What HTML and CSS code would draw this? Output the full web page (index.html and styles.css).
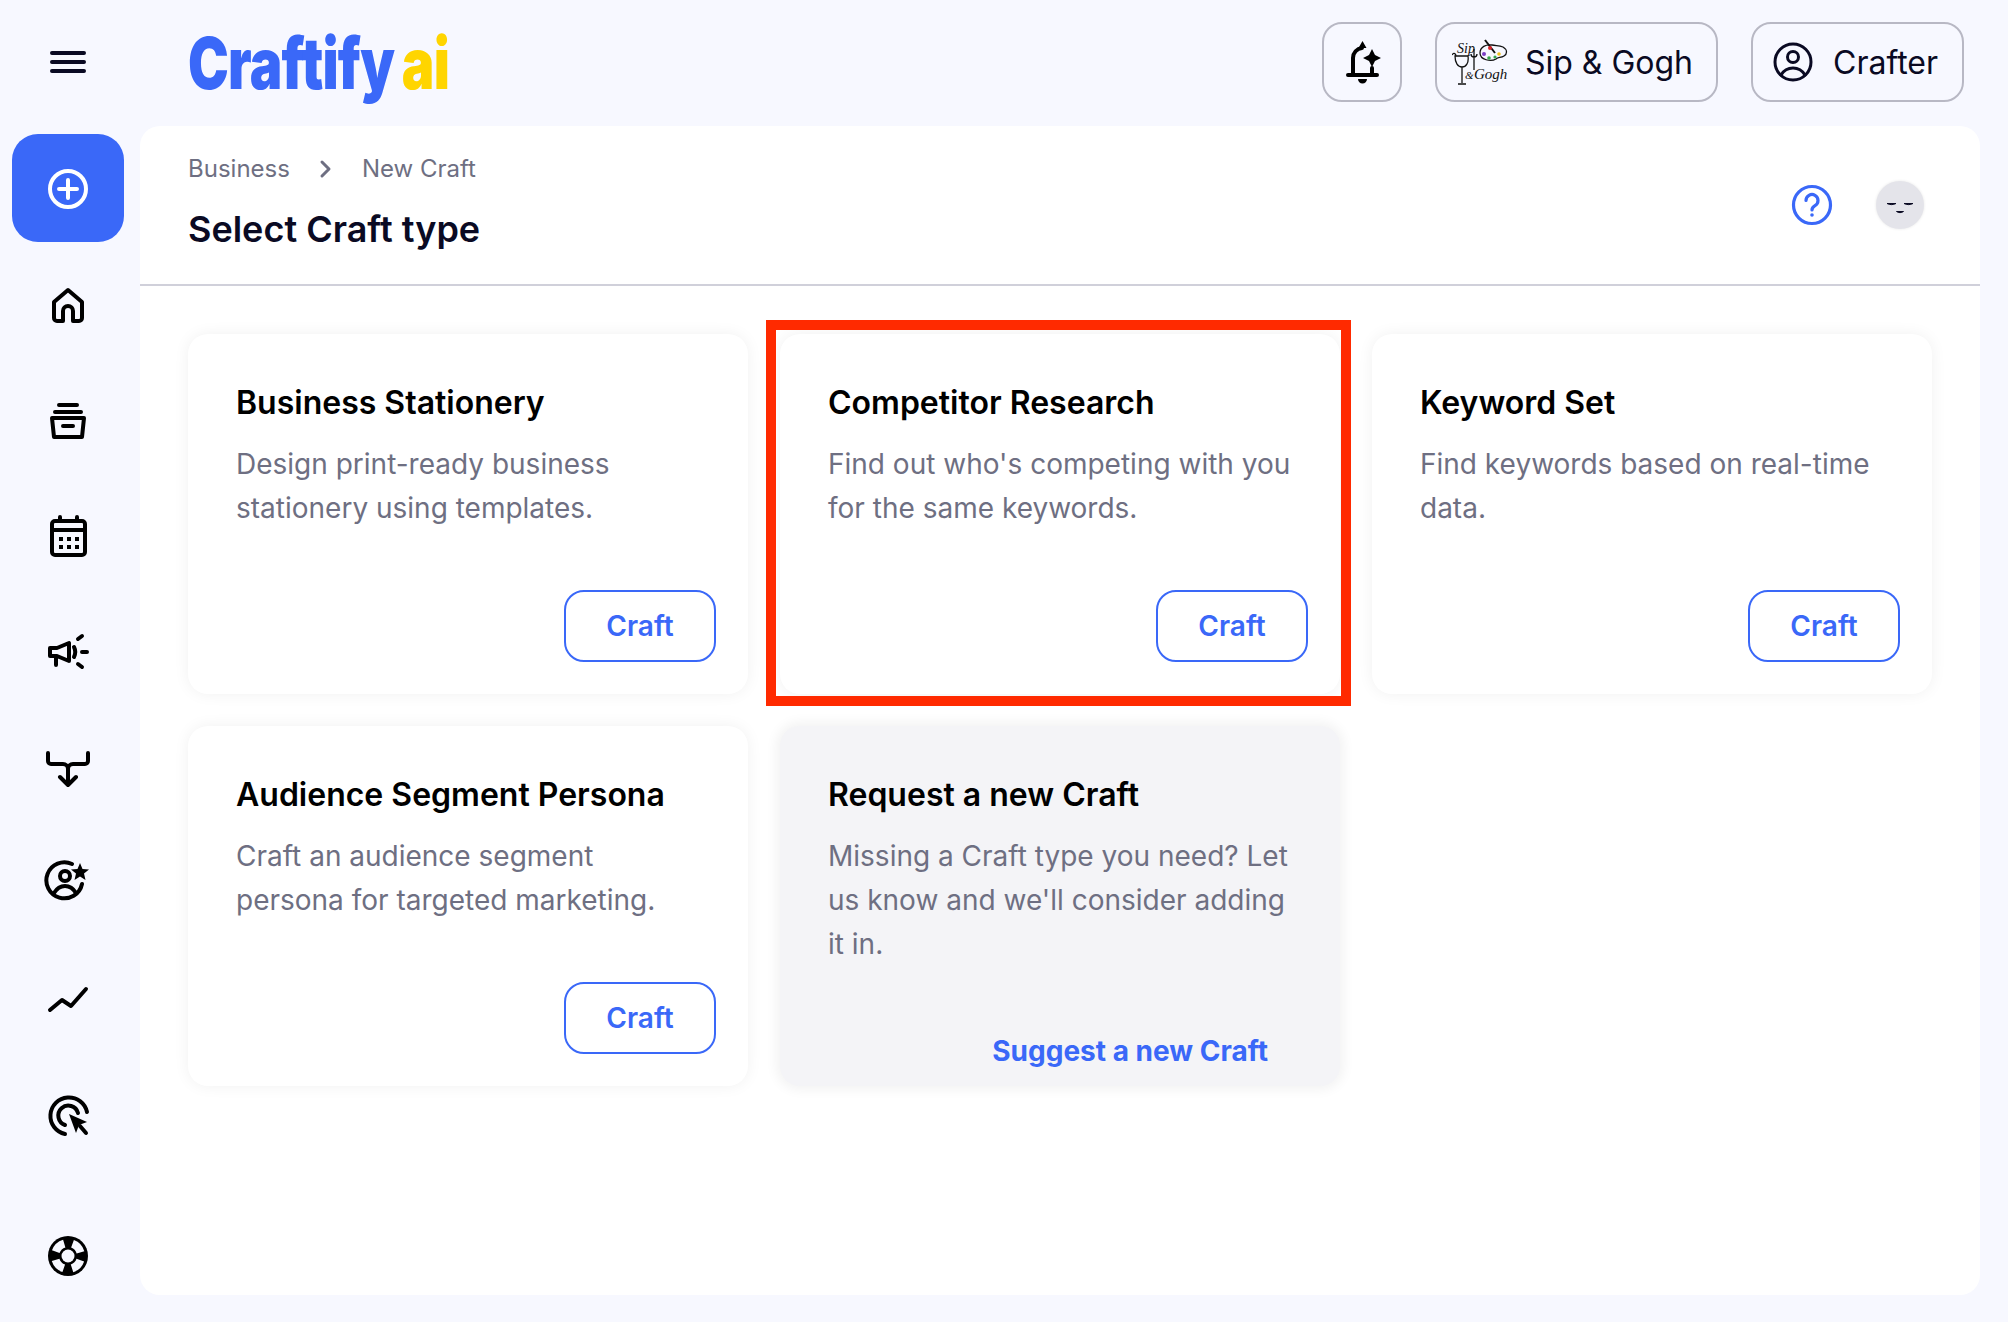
FILE: index.html
```html
<!DOCTYPE html>
<html>
<head>
    <title>Select Craft type</title>
    <link rel="stylesheet" href="styles.css">
</head>
<body>
    <div class="app">
        <div class="menu-cell">
            <svg class="burger" width="36" height="24" viewBox="0 0 36 24"><path d="M2 3H34M2 12H34M2 21H34"/></svg>
        </div>

        <header class="topbar">
            <a class="logo"><span class="logo-main">Craftify</span><span class="logo-ai">ai</span></a>
            <div class="top-actions">
                <button class="top-btn bell-btn">
                    <svg class="icon" width="48" height="48" viewBox="-1 0 48 48">
                        <path d="M14 36V20a10 10 0 0 1 9-10M33 30V36M9 37H38"/>
                        <path class="solid" d="M23.500 3l4 7h-8zM19 41h9a4.500 4.500 0 0 1-9 0zM33 11l3 6 6 3-6 3-3 6-3-6-6-3 6-3z"/>
                    </svg>
                </button>
                <button class="top-btn brand-btn">
                    <svg class="brand-mark" width="56" height="46" viewBox="0 0 56 46">
                        <text class="mark-script" x="5" y="14">Sip</text>
                        <path class="mark-line" d="M0 16c2-3 4-1 4 1M3 17h13c1 7-2 11-6 11s-7-4-7-11zM10 28V44M6 45H14M22 10V31M19 15c0 4 6 4 6 0"/>
                        <text class="mark-script mark-small" x="13" y="40">&amp;</text>
                        <text class="mark-script mark-big" x="22" y="40">Gogh</text>
                        <path class="mark-line" d="M28 14c0-6 6-9 12-8 4 1 7 0 11 2 5 3 4 7 1 9-3 2-6 1-8 3-5 3-16 1-16-6z"/>
                        <path class="mark-line mark-brush" d="M33 1l10 13"/>
                        <circle cx="32" cy="15" r="2" fill="#7b3fc4"/>
                        <circle cx="38" cy="9" r="2" fill="#d8262c"/>
                        <circle cx="37" cy="19" r="1.800" fill="#35a84a"/>
                        <circle cx="47" cy="15" r="1.800" fill="#f1c21b"/>
                        <circle cx="43" cy="18" r="1.600" fill="#35a84a"/>
                    </svg>
                    <span>Sip &amp; Gogh</span>
                </button>
                <button class="top-btn crafter-btn">
                    <svg class="icon thin" width="40" height="40" viewBox="0 0 40 40">
                        <circle cx="20" cy="20" r="18"/>
                        <circle cx="20" cy="15" r="5.500"/>
                        <path d="M8 33c3-5 7-7 12-7s9 2 12 7"/>
                    </svg>
                    <span>Crafter</span>
                </button>
            </div>
        </header>

        <nav class="sidebar">
            <a class="new-btn">
                <svg class="icon white" width="40" height="40" viewBox="0 0 40 40">
                    <circle cx="20" cy="20" r="18"/>
                    <path d="M20 11V29M11 20H29"/>
                </svg>
            </a>
            <a class="nav-item">
                <svg class="icon" width="48" height="48" viewBox="0 1 48 48"><path d="M10 21L24 9L38 21V37a3 3 0 0 1-3 3H29V30a5 5 0 0 0-10 0V40H13a3 3 0 0 1-3-3Z"/></svg>
            </a>
            <a class="nav-item">
                <svg class="icon" width="48" height="48" viewBox="0 0 48 48"><path d="M15 8H33M11 15H37M8 21H40L38 40H10ZM19 29H29"/></svg>
            </a>
            <a class="nav-item">
                <svg class="icon" width="48" height="48" viewBox="0 0 48 48">
                    <rect x="8" y="8" width="33" height="34" rx="3"/>
                    <path d="M16 4V8M33 4V8M8 17H41"/>
                    <path class="solid" d="M15 24h4v4h-4zM23 24h4v4h-4zM31 24h4v4h-4zM15 32h4v4h-4zM23 32h4v4h-4zM31 32h4v4h-4z"/>
                </svg>
            </a>
            <a class="nav-item">
                <svg class="icon" width="48" height="48" viewBox="0 0 48 48">
                    <path d="M6 20H13L25 15V33L13 28H6ZM12 28V37M30 19c1.500 3 1.500 7 0 10M34 11L38 8M38 24H43M34 36L38 39"/>
                </svg>
            </a>
            <a class="nav-item">
                <svg class="icon" width="48" height="48" viewBox="0 -2 48 48"><path d="M4 7v8a3 3 0 0 0 3 3h12a5 5 0 0 1 5 5v15M44 7v8a3 3 0 0 1-3 3H29a5 5 0 0 0-5 5M16 31L24 39L32 31"/></svg>
            </a>
            <a class="nav-item">
                <svg class="icon" width="48" height="48" viewBox="0 3 48 48">
                    <path d="M28 8A18 18 0 1 0 38 28"/>
                    <circle cx="21" cy="20" r="5"/>
                    <path d="M10 37c3-5 7-7 11-7s8 2 11 7"/>
                    <path class="solid" d="M36 7l2.500 6 6.500.5-5 4 1.500 6.500-5.500-3.500-5.500 3.500 1.500-6.500-5-4 6.500-.5z"/>
                </svg>
            </a>
            <a class="nav-item">
                <svg class="icon" width="48" height="48" viewBox="0 0 48 48"><path d="M6 35L18 25L27 31L42 14"/></svg>
            </a>
            <a class="nav-item">
                <svg class="icon" width="48" height="48" viewBox="0 -2 48 48">
                    <path d="M43 20A18.500 18.500 0 1 0 21 42M34 21A10 10 0 1 0 21 33"/>
                    <path class="solid" d="M25 22L43 30L35 33L32 41Z"/>
                    <path d="M36 34L42 41"/>
                </svg>
            </a>
            <a class="nav-item help-item">
                <svg width="48" height="48" viewBox="0 0 48 48">
                    <circle cx="24" cy="24" r="20" fill="#000"/>
                    <circle class="ring-gaps" cx="24" cy="24" r="13"/>
                    <circle cx="24" cy="24" r="6.500" fill="#f7f8ff"/>
                </svg>
            </a>
        </nav>

        <main class="panel">
            <div class="panel-head">
                <div>
                    <div class="crumbs">
                        <span>Business</span>
                        <svg class="crumb-arrow" width="14" height="20" viewBox="0 0 14 20"><path d="M3 3L10 10L3 17"/></svg>
                        <span>New Craft</span>
                    </div>
                    <h1>Select Craft type</h1>
                </div>
                <div class="head-tools">
                    <svg class="help-icon" width="42" height="42" viewBox="0 0 42 42">
                        <circle cx="21" cy="21" r="18.500"/>
                        <path d="M15 16.500a6 6 0 1 1 9 5.200c-2 1.200-3 2.300-3 4.300"/>
                        <circle class="dot" cx="21" cy="31" r="1.800"/>
                    </svg>
                    <div class="face">
                        <svg width="28" height="20" viewBox="0 0 28 20">
                            <path d="M1 8.500c3 1.500 6 1.500 9 0zM18 8.500c3 1.500 6 1.500 9 0zM10.500 16.500c2 1.500 5 1.500 7 0z"/>
                        </svg>
                    </div>
                </div>
            </div>

            <div class="cards">
                <div class="card">
                    <h2>Business Stationery</h2>
                    <p>Design print-ready business stationery using templates.</p>
                    <a class="craft-btn">Craft</a>
                </div>
                <div class="card">
                    <h2>Competitor Research</h2>
                    <p>Find out who's competing with you for the same keywords.</p>
                    <a class="craft-btn">Craft</a>
                    <div class="highlight"></div>
                </div>
                <div class="card">
                    <h2>Keyword Set</h2>
                    <p>Find keywords based on real-time data.</p>
                    <a class="craft-btn">Craft</a>
                </div>
                <div class="card">
                    <h2>Audience Segment Persona</h2>
                    <p>Craft an audience segment persona for targeted marketing.</p>
                    <a class="craft-btn">Craft</a>
                </div>
                <div class="card card-request">
                    <h2>Request a new Craft</h2>
                    <p>Missing a Craft type you need? Let us know and we'll consider adding it in.</p>
                    <a class="suggest-link">Suggest a new Craft</a>
                </div>
            </div>
        </main>
    </div>
</body>
</html>
```

FILE: styles.css
```css
* {
    box-sizing: border-box;
}

body {
    margin: 0;
    padding: 0;
    background-color: #f7f8ff;
    color: #0a0a23;
    font-family: Inter, "Liberation Sans", sans-serif;
}

h1, h2, p {
    margin: 0;
}

.app {
    display: grid;
    grid-template-columns: 140px 1fr;
    grid-template-rows: 126px 1fr;
    height: 1322px;
}

.icon {
    fill: none;
    stroke: #000;
    stroke-width: 4;
    stroke-linecap: round;
    stroke-linejoin: round;
}

.icon .solid {
    fill: #000;
    stroke: none;
}

.icon.white {
    stroke: #fff;
}

.icon.thin {
    stroke: #0a0a23;
    stroke-width: 3;
}

/* top bar */
.menu-cell {
    display: flex;
    justify-content: center;
    padding: 50px 4px 0 0;
}

.burger {
    fill: none;
    stroke: #0a0a23;
    stroke-width: 4;
    stroke-linecap: round;
}

.topbar {
    display: flex;
    justify-content: space-between;
    padding: 22px 44px 0 48px;
}

.logo {
    display: block;
    width: 262px;
    height: 90px;
    margin-top: -4px;
    font-size: 71px;
    font-weight: 900;
    line-height: 90px;
    white-space: nowrap;
    letter-spacing: -1px;
    transform: scaleX(0.77);
    transform-origin: left top;
}

.logo-main {
    color: #3a68f8;
}

.logo-ai {
    margin-left: 10px;
    color: #ffd500;
}

.top-actions {
    display: flex;
    gap: 33px;
    height: 80px;
}

.top-btn {
    display: flex;
    align-items: center;
    gap: 16px;
    height: 80px;
    padding: 0 24px 0 16px;
    background: none;
    border: 2px solid #b8b8c4;
    border-radius: 20px;
    color: #0a0a23;
    font-family: inherit;
    font-size: 32px;
}

.bell-btn {
    padding: 0 14px;
}

.brand-btn {
    gap: 17px;
    padding-right: 23px;
    padding-left: 15px;
}

.crafter-btn {
    gap: 20px;
    padding-left: 20px;
}

.brand-mark {
    flex-shrink: 0;
}

.mark-script {
    font-family: "Liberation Serif", serif;
    font-style: italic;
    font-size: 14px;
    fill: #111;
}

.mark-small {
    font-size: 11px;
}

.mark-big {
    font-size: 15px;
}

.mark-line {
    fill: none;
    stroke: #111;
    stroke-width: 1.300;
}

.mark-brush {
    stroke-width: 2;
}

/* sidebar */
.sidebar {
    display: flex;
    flex-direction: column;
    align-items: center;
    padding: 8px 4px 42px 0;
}

.new-btn {
    display: flex;
    align-items: center;
    justify-content: center;
    width: 112px;
    height: 108px;
    margin-bottom: 6px;
    padding-top: 1px;
    background-color: #3a68f8;
    border-radius: 26px;
}

.nav-item {
    display: flex;
    align-items: center;
    justify-content: center;
    flex-shrink: 0;
    width: 100%;
    height: 115.5px;
}

.help-item {
    height: 48px;
    margin-top: auto;
}

.ring-gaps {
    fill: none;
    stroke: #f7f8ff;
    stroke-width: 8;
    stroke-dasharray: 12 8.420;
    stroke-dashoffset: -4.200;
}

/* main panel */
.panel {
    margin: 0 28px 27px 0;
    background-color: #fff;
    border-radius: 20px;
}

.panel-head {
    display: flex;
    justify-content: space-between;
    align-items: flex-start;
    height: 160px;
    padding: 26px 56px 0 48px;
    border-bottom: 2px solid #d0d0da;
}

.crumbs {
    display: flex;
    align-items: center;
    gap: 29px;
    color: #6e6f82;
    font-size: 24px;
    line-height: 34px;
}

.crumb-arrow {
    fill: none;
    stroke: #6e6f82;
    stroke-width: 3;
    stroke-linecap: round;
    stroke-linejoin: round;
}

h1 {
    margin-top: 20px;
    font-size: 36px;
    font-weight: 600;
    line-height: 46px;
}

.head-tools {
    display: flex;
    align-items: center;
    gap: 43px;
    margin-top: 29px;
}

.help-icon {
    fill: none;
    stroke: #3a68f8;
    stroke-width: 3.200;
    stroke-linecap: round;
}

.help-icon .dot {
    fill: #3a68f8;
    stroke: none;
}

.face {
    display: flex;
    align-items: center;
    justify-content: center;
    width: 48px;
    height: 48px;
    background-color: #e4e4ea;
    border-radius: 50%;
    box-shadow: 0 0 3px rgba(0, 0, 0, 0.1);
}

.face path {
    fill: #0a0a23;
    stroke: #0a0a23;
    stroke-width: 1;
}

/* cards */
.cards {
    display: grid;
    grid-template-columns: repeat(3, 560px);
    grid-auto-rows: 360px;
    gap: 32px;
    padding: 48px 0 0 48px;
}

.card {
    position: relative;
    display: flex;
    flex-direction: column;
    padding: 48px 48px 32px;
    background-color: #fff;
    border-radius: 20px;
    box-shadow: 0 0 16px rgba(0, 0, 0, 0.06);
}

.card h2 {
    color: #000;
    font-size: 32px;
    font-weight: 600;
    line-height: 42px;
}

.card p {
    margin-top: 18px;
    color: #6e6f82;
    font-size: 28px;
    line-height: 44px;
}

.craft-btn {
    display: flex;
    align-items: center;
    justify-content: center;
    align-self: flex-end;
    width: 152px;
    height: 72px;
    margin-top: auto;
    margin-right: -16px;
    border: 2px solid #3a68f8;
    border-radius: 20px;
    color: #3a68f8;
    font-size: 28px;
    font-weight: 600;
}

.card-request {
    background-color: #f4f4f7;
    box-shadow: 0 0 12px 4px rgba(0, 0, 0, 0.05);
}

.suggest-link {
    align-self: flex-end;
    margin-top: auto;
    margin-right: 24px;
    margin-bottom: -19px;
    color: #3a68f8;
    font-size: 28px;
    font-weight: 700;
    line-height: 44px;
}

.highlight {
    position: absolute;
    top: -14px;
    right: -11px;
    bottom: -12px;
    left: -14px;
    border: 10px solid #ff2a00;
    pointer-events: none;
}
```
